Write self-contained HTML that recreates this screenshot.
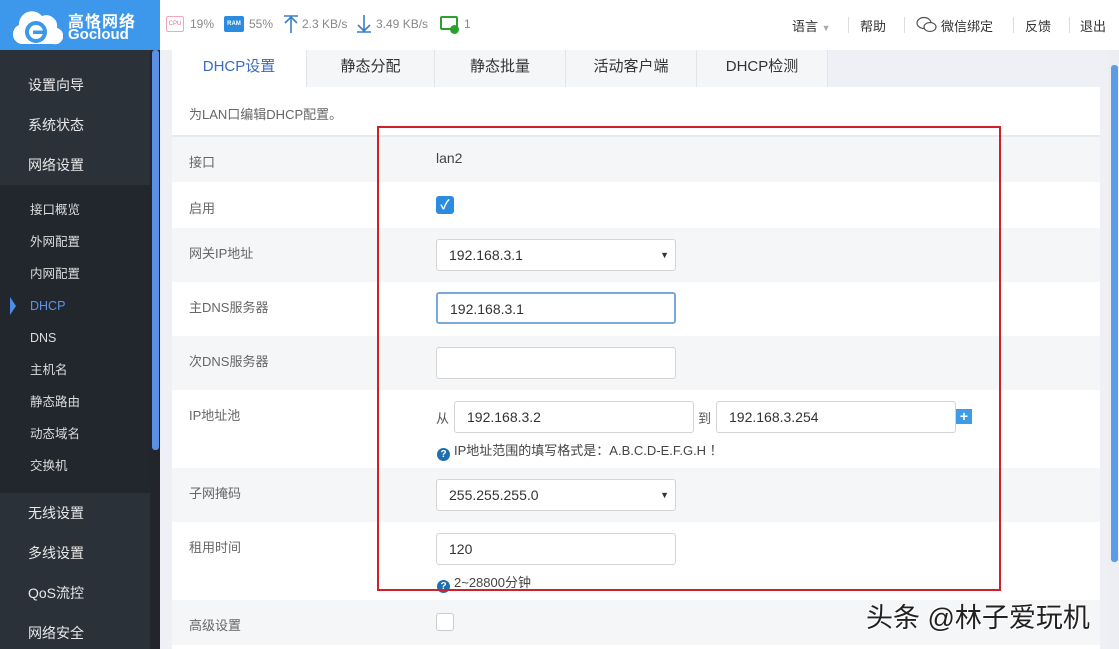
<!DOCTYPE html>
<html><head><meta charset="utf-8"><style>
*{margin:0;padding:0;box-sizing:border-box}
body{width:1119px;height:649px;overflow:hidden;position:relative;background:#eef0f5;font-family:"Liberation Sans","Noto Sans CJK SC",sans-serif;font-size:13px;color:#555}
.abs{position:absolute}
#hdr{left:0;top:0;width:1119px;height:50px;background:#fff}
#logo{left:0;top:0;width:160px;height:50px;background:#3d97ea;color:#fff}
#side{left:0;top:50px;width:150px;height:599px;background:#2b3139}
#sub{left:0;top:185px;width:150px;height:308px;background:#22272e}
.mi{position:absolute;left:28px;color:#e8e8e8;font-size:14px;line-height:16px}
.si{position:absolute;left:30px;color:#dcdcdc;font-size:12.5px;line-height:16px}
#strip{left:150px;top:50px;width:10px;height:599px;background:#22262c}
#thumb{left:152px;top:50px;width:7px;height:400px;background:#5b8fe6;border-radius:3px}
.tab{position:absolute;top:50px;height:37px;background:#f5f6f8;border-right:1px solid #e2e4ea;text-align:center;line-height:34px;font-size:15px;color:#333}
#panel{left:172px;top:87px;width:928px;height:562px;background:#fff}
.row{position:absolute;left:172px;width:928px}
.g{background:#f5f6f8}
.lb{position:absolute;left:189px;font-size:13px;color:#666}
.inp{position:absolute;height:32px;border:1px solid #d4d4d4;border-radius:3px;background:#fff;font-size:14px;color:#333;line-height:30px;padding-left:12px}
.sel:after{content:"▼";position:absolute;right:6px;top:0;font-size:9px;color:#333}
.q{display:inline-block;width:13px;height:13px;border-radius:50%;background:#1f6fb0;color:#fff;font-size:10px;font-weight:bold;text-align:center;line-height:13px;vertical-align:-2px;margin-right:4px}
.tb{position:absolute;top:17px;font-size:12px;color:#888}
.tr{position:absolute;top:16px;font-size:13px;color:#333}
.sep{position:absolute;top:17px;width:1px;height:16px;background:#ddd}
</style></head><body>
<div id="hdr" class="abs"></div>
<div id="logo" class="abs">
<svg class="abs" style="left:11px;top:6px" width="52" height="40" viewBox="0 0 52 40"><path d="M10 38 A10 10 0 0 1 8 19 A13 13 0 0 1 31 10 A11 11 0 0 1 46 22 A8 8 0 0 1 42 38 Z" fill="#fff"/><circle cx="25" cy="26" r="9" fill="none" stroke="#3d97ea" stroke-width="4"/><rect x="22" y="24.5" width="11" height="3.5" fill="#3d97ea"/></svg>
<div class="abs" style="left:68px;top:8px;font-size:16px;font-weight:bold;letter-spacing:1px">高恪网络</div>
<div class="abs" style="left:68px;top:26px;font-size:15px;font-weight:bold">Gocloud</div>
</div>
<div class="abs" style="left:166px;top:16px;width:18px;height:16px;border:1px solid #f0a8b8;border-radius:2px;font-size:6px;color:#e07090;text-align:center;line-height:14px">CPU</div>
<div class="tb" style="left:190px">19%</div>
<div class="abs" style="left:224px;top:16px;width:20px;height:16px;background:#2a8be0;border-radius:2px;font-size:6px;color:#fff;text-align:center;line-height:16px;font-weight:bold">RAM</div>
<div class="tb" style="left:249px">55%</div>
<svg class="abs" style="left:283px;top:14px" width="16" height="20" viewBox="0 0 16 20"><path d="M1 2H15M8 3V19M2 9L8 3L14 9" fill="none" stroke="#3a7ec8" stroke-width="1.6"/></svg>
<div class="tb" style="left:302px">2.3 KB/s</div>
<svg class="abs" style="left:356px;top:14px" width="16" height="20" viewBox="0 0 16 20"><path d="M1 18H15M8 1V17M2 11L8 17L14 11" fill="none" stroke="#3a7ec8" stroke-width="1.6"/></svg>
<div class="tb" style="left:376px">3.49 KB/s</div>
<div class="abs" style="left:440px;top:16px;width:18px;height:14px;border:2px solid #2ca02c;border-radius:2px"></div>
<div class="abs" style="left:450px;top:25px;width:9px;height:9px;border-radius:50%;background:#2ca02c"></div>
<div class="tb" style="left:464px">1</div>
<div class="tr" style="left:792px">语言 <span style="font-size:9px;color:#aaa">▼</span></div>
<div class="sep" style="left:848px"></div>
<div class="tr" style="left:860px">帮助</div>
<div class="sep" style="left:904px"></div>
<svg class="abs" style="left:916px;top:16px" width="22" height="18" viewBox="0 0 22 18"><ellipse cx="8" cy="7" rx="7" ry="5.5" fill="#fff" stroke="#555" stroke-width="1.2"/><ellipse cx="14" cy="11" rx="6" ry="4.5" fill="#fff" stroke="#555" stroke-width="1.2"/></svg>
<div class="tr" style="left:941px">微信绑定</div>
<div class="sep" style="left:1013px"></div>
<div class="tr" style="left:1025px">反馈</div>
<div class="sep" style="left:1069px"></div>
<div class="tr" style="left:1080px">退出</div>

<div id="side" class="abs"></div>
<div id="sub" class="abs"></div>
<div class="mi" style="top:77px">设置向导</div>
<div class="mi" style="top:117px">系统状态</div>
<div class="mi" style="top:157px">网络设置</div>
<div class="si" style="top:202px">接口概览</div>
<div class="si" style="top:234px">外网配置</div>
<div class="si" style="top:266px">内网配置</div>
<div class="abs" style="left:10px;top:297px;width:0;height:0;border-top:9px solid transparent;border-bottom:9px solid transparent;border-left:6px solid #4a8ee8"></div>
<div class="si" style="top:298px;color:#5b95ea">DHCP</div>
<div class="si" style="top:330px">DNS</div>
<div class="si" style="top:362px">主机名</div>
<div class="si" style="top:394px">静态路由</div>
<div class="si" style="top:426px">动态域名</div>
<div class="si" style="top:458px">交换机</div>
<div class="mi" style="top:505px">无线设置</div>
<div class="mi" style="top:545px">多线设置</div>
<div class="mi" style="top:585px">QoS流控</div>
<div class="mi" style="top:625px">网络安全</div>
<div id="strip" class="abs"></div>
<div id="thumb" class="abs"></div>

<div class="tab" style="left:172px;width:135px;background:#fff;color:#3a6bc0">DHCP设置</div>
<div class="tab" style="left:307px;width:128px">静态分配</div>
<div class="tab" style="left:435px;width:131px">静态批量</div>
<div class="tab" style="left:566px;width:131px">活动客户端</div>
<div class="tab" style="left:697px;width:131px">DHCP检测</div>

<div id="panel" class="abs"></div>
<div class="abs" style="left:189px;top:104px;font-size:13px;color:#666">为LAN口编辑DHCP配置。</div>
<div class="row g" style="top:135px;height:47px;border-top:2px solid #e8eaf0"></div>
<div class="lb" style="top:152px">接口</div>
<div class="abs" style="left:436px;top:150px;font-size:14px;color:#444">lan2</div>
<div class="lb" style="top:198px">启用</div>
<div class="abs" style="left:436px;top:196px;width:18px;height:18px;background:#2a8be0;border-radius:3px;color:#fff;font-size:13px;text-align:center;line-height:18px;font-weight:bold">✓</div>
<div class="row g" style="top:228px;height:54px"></div>
<div class="lb" style="top:243px">网关IP地址</div>
<div class="inp sel" style="left:436px;top:239px;width:240px">192.168.3.1</div>
<div class="lb" style="top:297px">主DNS服务器</div>
<div class="inp" style="left:436px;top:292px;width:240px;border:2px solid #7aa8dc">192.168.3.1</div>
<div class="row g" style="top:336px;height:54px"></div>
<div class="lb" style="top:351px">次DNS服务器</div>
<div class="inp" style="left:436px;top:347px;width:240px"></div>
<div class="lb" style="top:405px">IP地址池</div>
<div class="abs" style="left:436px;top:408px;font-size:13px;color:#555">从</div>
<div class="inp" style="left:454px;top:401px;width:240px">192.168.3.2</div>
<div class="abs" style="left:698px;top:408px;font-size:13px;color:#555">到</div>
<div class="inp" style="left:716px;top:401px;width:240px">192.168.3.254</div>
<div class="abs" style="left:956px;top:409px;width:16px;height:15px;background:#3d9be8;color:#fff;font-weight:bold;font-size:14px;text-align:center;line-height:15px">+</div>
<div class="abs" style="left:437px;top:440px;font-size:13px;color:#444"><span class="q">?</span>IP地址范围的填写格式是：A.B.C.D-E.F.G.H ！</div>
<div class="row g" style="top:468px;height:54px"></div>
<div class="lb" style="top:483px">子网掩码</div>
<div class="inp sel" style="left:436px;top:479px;width:240px">255.255.255.0</div>
<div class="lb" style="top:537px">租用时间</div>
<div class="inp" style="left:436px;top:533px;width:240px">120</div>
<div class="abs" style="left:437px;top:572px;font-size:13px;color:#444"><span class="q">?</span>2~28800分钟</div>
<div class="row g" style="top:600px;height:45px"></div>
<div class="lb" style="top:615px">高级设置</div>
<div class="abs" style="left:436px;top:613px;width:18px;height:18px;border:1px solid #ccc;border-radius:3px;background:#fff"></div>

<div class="abs" style="left:377px;top:126px;width:624px;height:465px;border:2px solid #d0202a"></div>
<div class="abs" style="left:866px;top:596px;font-size:27px;color:#222;text-shadow:1px 1px 0 #fff,-1px -1px 0 #fff;white-space:nowrap">头条 @林子爱玩机</div>

<div class="abs" style="left:1108px;top:50px;width:11px;height:599px;background:#eceef2"></div>
<div class="abs" style="left:1111px;top:65px;width:7px;height:497px;background:#5b9be8;border-radius:3px"></div>
</body></html>
